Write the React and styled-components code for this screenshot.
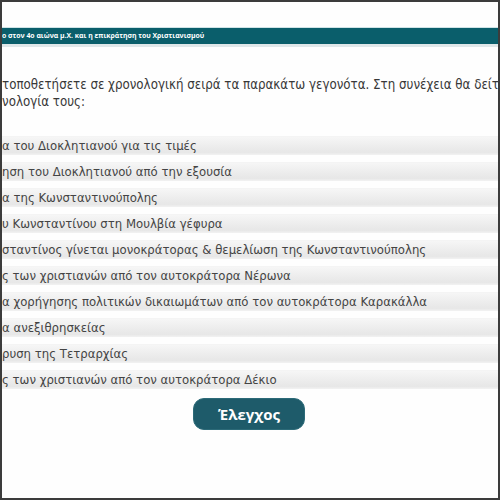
import styled, { createGlobalStyle } from "styled-components";

const GlobalStyle = createGlobalStyle`
  html, body {
    margin: 0;
    padding: 0;
    background: #fff;
    overflow: hidden;
  }
`;

const Frame = styled.div`
  width: 500px;
  height: 500px;
  box-sizing: border-box;
  border: 2px solid #3c3c3c;
  background: #fefefe;
  overflow: hidden;
  display: flex;
  flex-direction: column;
  font-family: "DejaVu Sans Condensed", "DejaVu Sans", sans-serif;
  font-stretch: condensed;
`;

const Header = styled.div`
  margin-top: 25px;
  height: 16px;
  border-top: 1px solid #cfe3e6;
  border-bottom: 3px solid #dfe7e9;
  background: #0a5e6b;
  color: #fff;
  font-family: "Open Sans", "Noto Sans", sans-serif;
  font-stretch: normal;
  font-size: 6.9px;
  font-weight: bold;
  line-height: 16px;
  white-space: nowrap;
`;

const Intro = styled.p`
  margin: 29px 0 26px;
  font-size: 13.2px;
  line-height: 17px;
  color: #383838;
  white-space: nowrap;
`;

const List = styled.ul`
  list-style: none;
  margin: 0;
  padding: 0;
  display: flex;
  flex-direction: column;
  gap: 7px;
`;

const Item = styled.li`
  height: 19px;
  box-sizing: border-box;
  border-top: 1px solid #f4f4f4;
  background: linear-gradient(#f6f6f6 0%, #ececec 55%, #e7e7e7 85%, #f2f2f2 100%);
  color: #444;
  font-size: 13px;
  line-height: 18px;
  white-space: nowrap;
`;

const Actions = styled.div`
  display: flex;
  justify-content: center;
  margin-top: 9px;
  padding-right: 2px;
`;

const CheckButton = styled.button`
  width: 112px;
  height: 32px;
  border: 1px solid #2c6a78;
  border-radius: 11px;
  background: #1e5b6a;
  color: #fff;
  font-family: "Open Sans", "Noto Sans", sans-serif;
  font-size: 15px;
  font-weight: bold;
  cursor: pointer;
`;

const events = [
  "α του Διοκλητιανού για τις τιμές",
  "ηση του Διοκλητιανού από την εξουσία",
  "α της Κωνσταντινούπολης",
  "υ Κωνσταντίνου στη Μουλβία γέφυρα",
  "σταντίνος γίνεται μονοκράτορας  & θεμελίωση της Κωνσταντινούπολης",
  "ς των χριστιανών από τον αυτοκράτορα Νέρωνα",
  "α χορήγησης πολιτικών δικαιωμάτων από τον αυτοκράτορα Καρακάλλα",
  "α ανεξιθρησκείας",
  "ρυση της Τετραρχίας",
  "ς των χριστιανών από τον αυτοκράτορα Δέκιο",
];

export default function App() {
  return (
    <>
      <GlobalStyle />
      <Frame>
        <Header>ο στον 4ο αιώνα μ.Χ. και η επικράτηση του Χριστιανισμού</Header>
        <Intro>
          τοποθετήσετε σε χρονολογική σειρά τα παρακάτω γεγονότα. Στη συνέχεια θα δείτε
          <br />
          νολογία τους:
        </Intro>
        <List>
          {events.map((e, i) => (
            <Item key={i}>{e}</Item>
          ))}
        </List>
        <Actions>
          <CheckButton>Έλεγχος</CheckButton>
        </Actions>
      </Frame>
    </>
  );
}
